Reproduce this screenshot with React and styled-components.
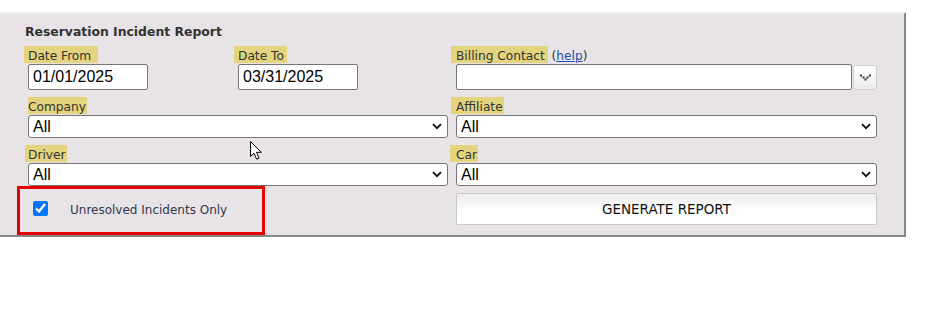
import React from "react";
import styled, { createGlobalStyle } from "styled-components";

const chevron = encodeURIComponent(
  '<svg xmlns="http://www.w3.org/2000/svg" width="10" height="7" viewBox="0 0 10 7"><path d="M1 1.2l4 4 4-4" fill="none" stroke="#111" stroke-width="1.9"/></svg>'
);

const Global = createGlobalStyle`
  html, body { margin: 0; padding: 0; background: #fff; }
  body { font-family: "DejaVu Sans", Verdana, sans-serif; }
  * { box-sizing: border-box; }
`;

const Page = styled.div`
  width: 925px;
  height: 333px;
  padding-top: 12px;
`;

const Panel = styled.section`
  position: relative;
  width: 906px;
  background: #e7e3e7;
  border-top: 2px solid #f1f0f1;
  border-right: 2px solid #878787;
  border-bottom: 2px solid #878787;
  padding: 8px 27px 0 28px;
`;

const Title = styled.h2`
  margin: 0 0 7px -3px;
  padding-top: 1px;
  font-size: 12.4px;
  font-weight: bold;
  line-height: 17px;
  height: 17px;
  color: #333;
`;

const Row = styled.div`
  display: grid;
  grid-template-columns: 420px 421px;
  column-gap: 8px;
  margin-top: ${(p) => p.$top || 0}px;
`;

const DatePair = styled.div`
  display: grid;
  grid-template-columns: 210px 210px;
`;

const Field = styled.div`
  display: flex;
  flex-direction: column;
  gap: 1px;
`;

const LabelLine = styled.div`
  height: 17px;
  line-height: 17px;
  font-size: 12.2px;
  color: #333;
  white-space: nowrap;
  padding-top: 2px;
`;

const Mark = styled.span`
  display: inline-block;
  height: 17px;
  margin-top: -2px;
  padding-top: 2px;
  background: #e4d47e;
  padding-left: ${(p) => p.$l ?? 4}px;
  padding-right: ${(p) => p.$r ?? 6}px;
  margin-left: -${(p) => p.$l ?? 4}px;
  vertical-align: top;
  line-height: 17px;
`;

const Help = styled.a`
  color: #1f4fb8;
  text-decoration: underline;
`;

const TextInput = styled.input`
  width: ${(p) => p.$w}px;
  height: 26px;
  border: 1px solid #767676;
  border-radius: 2px;
  background: #fff;
  padding: 0 4px;
  font-family: "Liberation Sans", Arial, sans-serif;
  font-size: 16px;
  color: #000;
  outline: none;
`;

const ContactRow = styled.div`
  display: flex;
  align-items: flex-start;
  gap: 1px;
`;

const LookupButton = styled.button`
  width: 24px;
  height: 25px;
  margin-top: 1px;
  padding: 0;
  border: 1px solid #cfcfcf;
  border-radius: 3px;
  background: linear-gradient(#ffffff, #ececec);
  display: flex;
  align-items: center;
  justify-content: center;
`;

const Select = styled.select`
  appearance: none;
  -webkit-appearance: none;
  width: 100%;
  height: 23px;
  border: 1px solid #767676;
  border-radius: 3px;
  padding: 0 4px;
  font-family: "Liberation Sans", Arial, sans-serif;
  font-size: 16px;
  color: #000;
  background: #fff url("data:image/svg+xml;utf8,${chevron}") no-repeat right 5px center;
  outline: none;
`;

const Highlight = styled.div`
  width: 248px;
  height: 49px;
  margin-left: -11px;
  border: 3px solid #e50000;
  display: flex;
  align-items: flex-start;
  padding: 12px 0 0 13px;
  gap: 22px;
`;

const Check = styled.input`
  width: 15px;
  height: 15px;
  margin: 0;
  accent-color: #0075ff;
`;

const CheckText = styled.label`
  margin-top: 2px;
  font-size: 12px;
  line-height: 15px;
  color: #2f3a4d;
`;

const Generate = styled.button`
  margin-top: 7px;
  width: 421px;
  height: 32px;
  border: 1px solid #c8c8c8;
  border-radius: 1px;
  background: linear-gradient(#ececec 0%, #ffffff 55%, #ffffff 100%);
  font-family: "DejaVu Sans", Verdana, sans-serif;
  font-size: 13.5px;
  color: #111;
  padding: 0;
`;

const Cursor = styled.svg`
  position: absolute;
  left: 249px;
  top: 126px;
  pointer-events: none;
`;

function Field2({ label, l, r, children }) {
  return (
    <Field>
      <LabelLine>
        <Mark $l={l} $r={r}>{label}</Mark>
      </LabelLine>
      {children}
    </Field>
  );
}

export default function App() {
  return (
    <Page>
      <Global />
      <Panel>
        <Title>Reservation Incident Report</Title>

        <Row>
          <DatePair>
            <Field2 label="Date From" l={4} r={7}>
              <TextInput $w={120} defaultValue="01/01/2025" />
            </Field2>
            <Field2 label="Date To" l={4} r={3}>
              <TextInput $w={120} defaultValue="03/31/2025" />
            </Field2>
          </DatePair>
          <Field>
            <LabelLine>
              <Mark $l={5} $r={3}>Billing Contact</Mark> (<Help href="#">help</Help>)
            </LabelLine>
            <ContactRow>
              <TextInput $w={396} />
              <LookupButton aria-label="lookup">
                <svg width="11" height="7" viewBox="0 0 11 7">
                  <g fill="#333">
                    <rect x="0" y="0.5" width="2" height="2" />
                    <rect x="2.5" y="2.5" width="2" height="2" />
                    <rect x="4.5" y="4.5" width="2" height="2" />
                    <rect x="6.5" y="2.5" width="2" height="2" />
                    <rect x="9" y="0.5" width="2" height="2" />
                  </g>
                </svg>
              </LookupButton>
            </ContactRow>
          </Field>
        </Row>

        <Row $top={7}>
          <Field2 label="Company" l={0} r={1}>
            <Select defaultValue="All">
              <option>All</option>
            </Select>
          </Field2>
          <Field2 label="Affiliate" l={5} r={1}>
            <Select defaultValue="All">
              <option>All</option>
            </Select>
          </Field2>
        </Row>

        <Row $top={7}>
          <Field2 label="Driver" l={3} r={1}>
            <Select defaultValue="All">
              <option>All</option>
            </Select>
          </Field2>
          <Field2 label="Car" l={6} r={1}>
            <Select defaultValue="All">
              <option>All</option>
            </Select>
          </Field2>
        </Row>

        <Row>
          <Highlight>
            <Check type="checkbox" id="unres" defaultChecked />
            <CheckText htmlFor="unres">Unresolved Incidents Only</CheckText>
          </Highlight>
          <div>
            <Generate>GENERATE REPORT</Generate>
          </div>
        </Row>

        <Cursor width="14" height="21" viewBox="0 0 14 21">
          <path
            d="M1.5 1.5 L1.5 16.5 L5 13.2 L7.6 19.2 L10 18.2 L7.5 12.3 L12.3 12.3 Z"
            fill="#fff"
            stroke="#000"
            strokeWidth="1"
            strokeLinejoin="miter"
          />
        </Cursor>
      </Panel>
    </Page>
  );
}
